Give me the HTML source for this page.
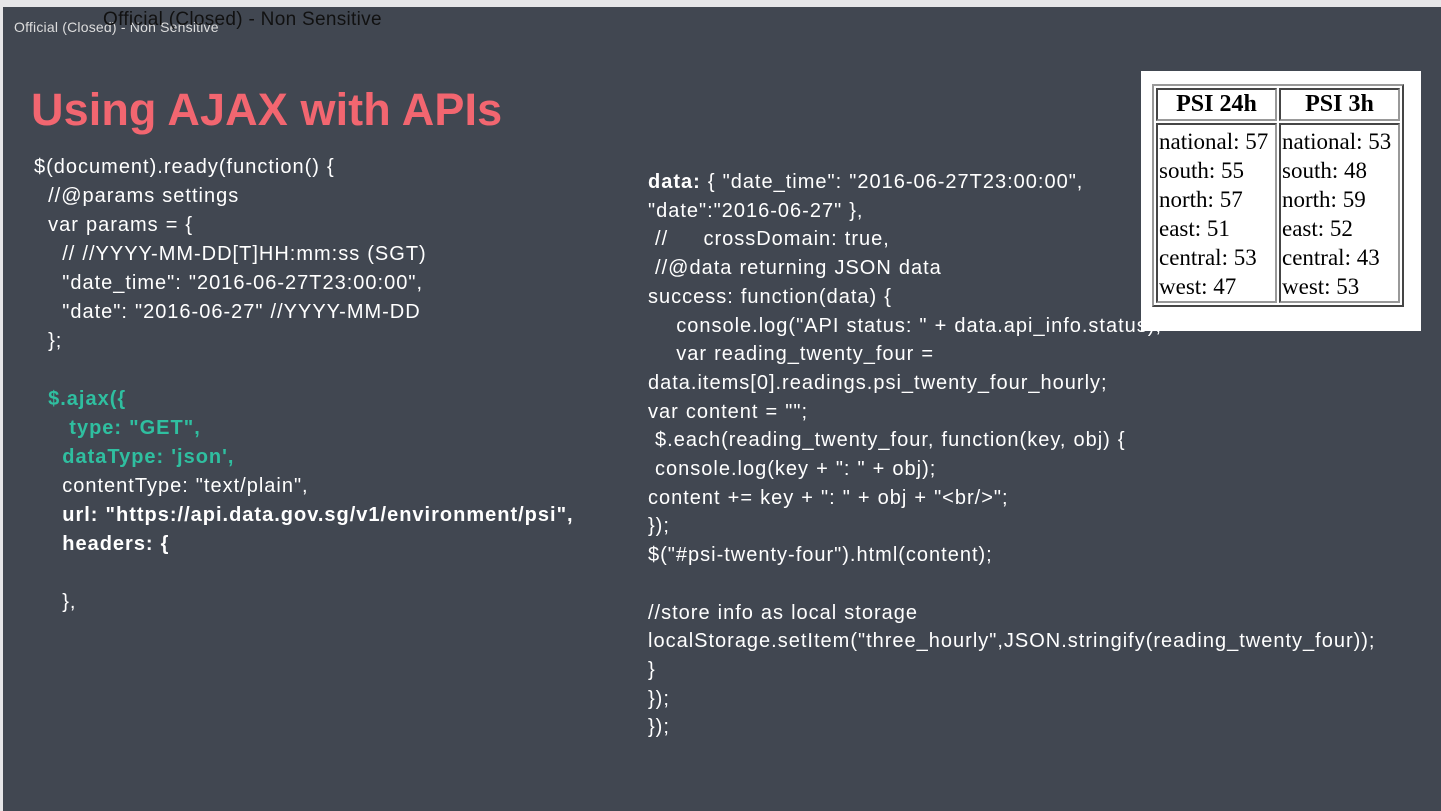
<!DOCTYPE html>
<html><head><meta charset="utf-8"><style>
body{margin:0;width:1441px;height:811px;background:#e6e6e8;overflow:hidden;position:relative;font-family:"Liberation Sans",sans-serif}
#s{position:absolute;left:3px;top:7px;width:1438px;height:804px;background:#414751}
.t{position:absolute;white-space:pre;color:#fff;font-size:20px;line-height:29px;letter-spacing:1px;word-spacing:0.5px}
.g{color:#2fbfa0;font-weight:bold}
.b{font-weight:bold}
#box{position:absolute;left:1141px;top:71px;width:280px;height:260px;background:#fff}
table{position:absolute;left:11px;top:13px;border:2px outset #999;border-spacing:2px;font-family:"Liberation Serif",serif;font-size:23px;color:#000}
td,th{border:2px inset #999;padding:0 1px;vertical-align:top;line-height:29px;white-space:nowrap}
td{padding-top:2px}
th{font-size:24px;text-align:center;height:29px}
</style></head><body>
<div id="s"></div>
<div class="t" style="left:14px;top:18px;font-size:14px;line-height:18px;color:#ddd;letter-spacing:0.2px;word-spacing:0">Official (Closed) - Non Sensitive</div>
<div class="t" style="left:103px;top:9px;font-size:19px;line-height:22px;color:#111;letter-spacing:0.3px;word-spacing:0">Official (Closed) - Non Sensitive</div>
<div class="t" style="left:31px;top:82px;font-size:45px;line-height:56px;font-weight:bold;color:#f26670;letter-spacing:0.1px;word-spacing:0">Using AJAX with APIs</div>
<div class="t" style="left:34px;top:153px">$(document).ready(function() {
  //@params settings
  var params = {
    // //YYYY-MM-DD[T]HH:mm:ss (SGT)
    "date_time": "2016-06-27T23:00:00",
    "date": "2016-06-27" //YYYY-MM-DD
  };

  <span class="g">$.ajax({</span>
<span class="g">     type: "GET",</span>
<span class="g">    dataType: 'json',</span>
    contentType: "text/plain",
<span class="b">    url: "https://api.data.gov.sg/v1/environment/psi",</span>
<span class="b">    headers: {</span>

    },</div>
<div class="t" style="left:648px;top:168px;line-height:28.7px"><span class="b">data:</span> { "date_time": "2016-06-27T23:00:00",
"date":"2016-06-27" },
 //     crossDomain: true,
 //@data returning JSON data
success: function(data) {
    console.log("API status: " + data.api_info.status);
    var reading_twenty_four =
data.items[0].readings.psi_twenty_four_hourly;
var content = "";
 $.each(reading_twenty_four, function(key, obj) {
 console.log(key + ": " + obj);
content += key + ": " + obj + "&lt;br/&gt;";
});
$("#psi-twenty-four").html(content);

//store info as local storage
localStorage.setItem("three_hourly",JSON.stringify(reading_twenty_four));
}
});
});</div>
<div id="box"><table>
<tr><th style="width:115px">PSI 24h</th><th style="width:115px">PSI 3h</th></tr>
<tr><td>national: 57<br>south: 55<br>north: 57<br>east: 51<br>central: 53<br>west: 47</td><td>national: 53<br>south: 48<br>north: 59<br>east: 52<br>central: 43<br>west: 53</td></tr>
</table></div>
</body></html>
